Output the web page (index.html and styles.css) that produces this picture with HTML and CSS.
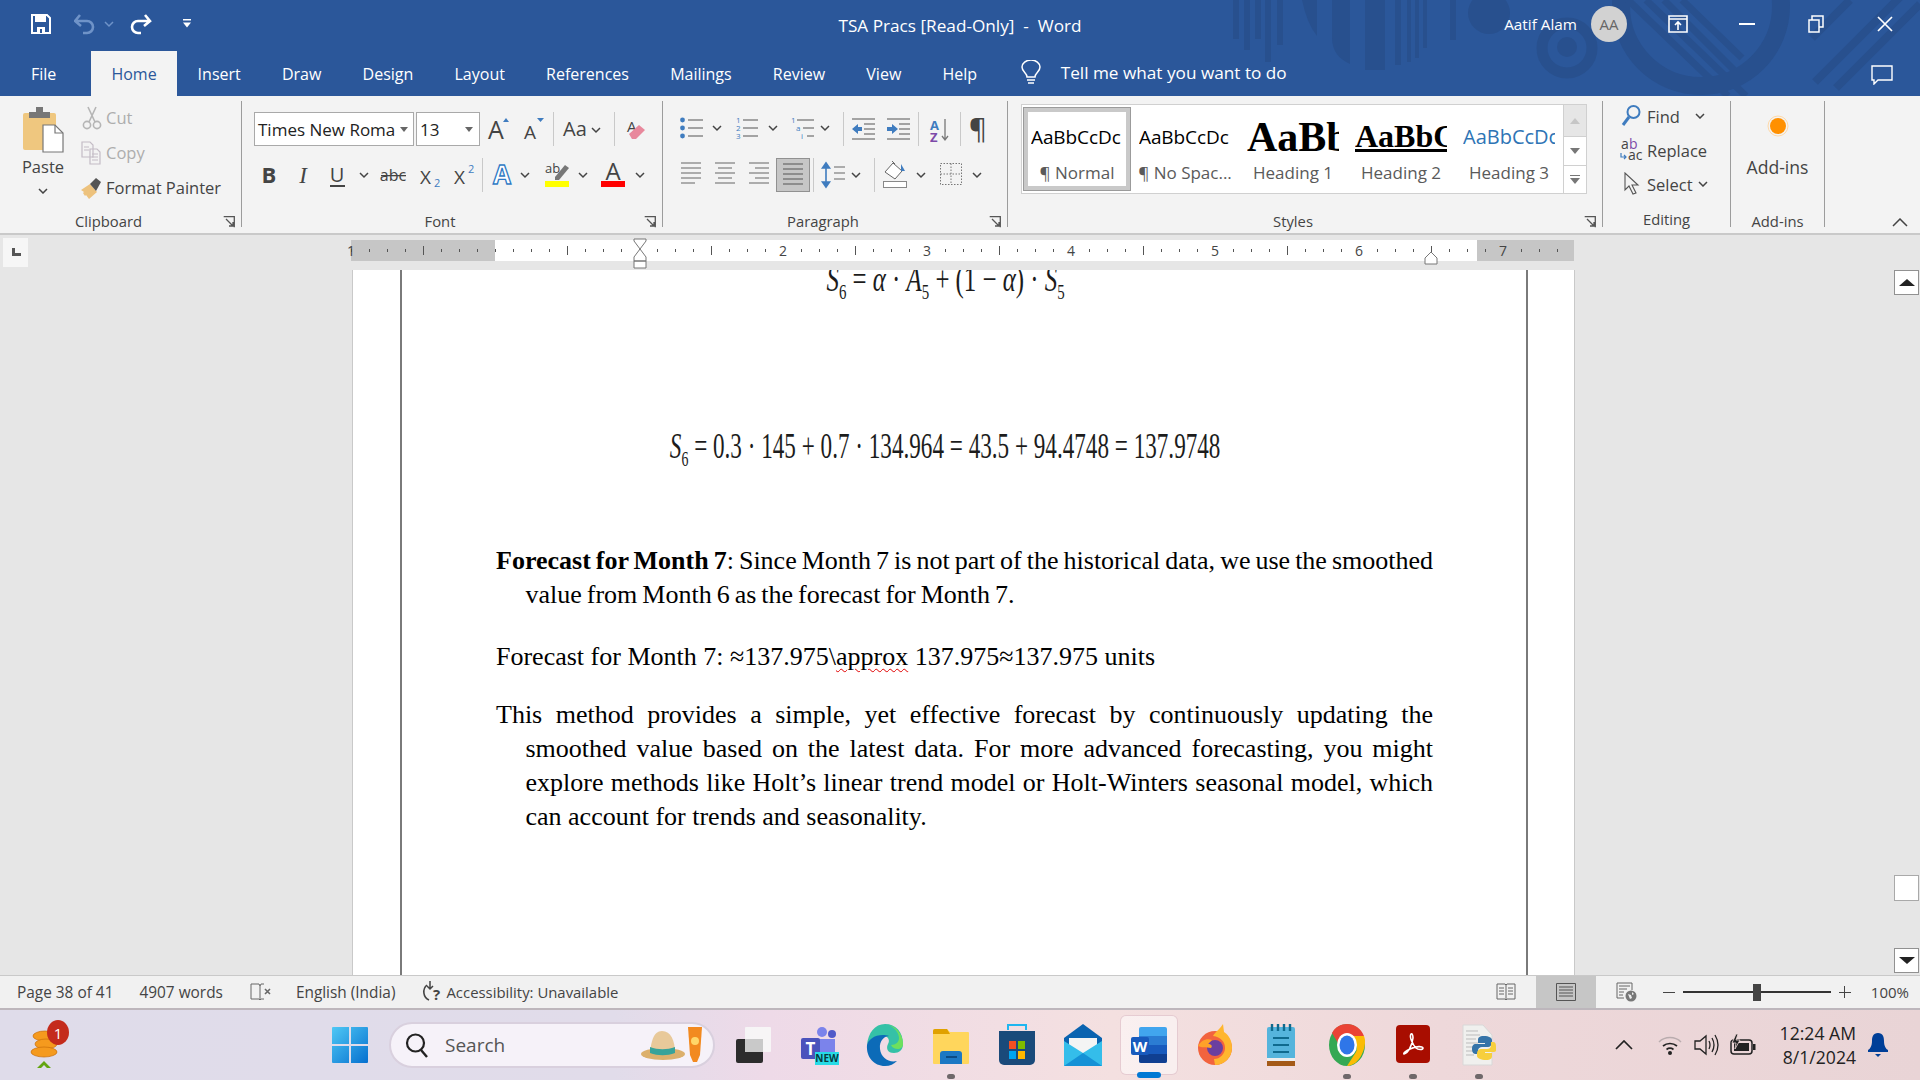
FILE: index.html
```html
<!DOCTYPE html>
<html lang="en">
<head>
<meta charset="utf-8">
<title>TSA Pracs [Read-Only] - Word</title>
<link rel="stylesheet" href="styles.css">
</head>
<body>
<div class="app">

<header class="titlebar">
  <svg class="pattern" width="720" height="96" viewBox="1200 0 720 96" aria-hidden="true">
    <g fill="#28508e">
      <rect x="1233" y="0" width="6" height="39"/><rect x="1244" y="0" width="6" height="50"/><rect x="1255" y="0" width="6" height="39"/><rect x="1265" y="0" width="6" height="62"/><rect x="1277" y="0" width="6" height="45"/>
      <path d="M1302 0h15v36q-10-12-15-36z"/><path d="M1332 0h18v64q-18-8-18-26z"/><rect x="1365" y="0" width="20" height="70"/><rect x="1395" y="0" width="6" height="65"/><rect x="1407" y="0" width="4" height="62"/><rect x="1415" y="0" width="4" height="58"/><rect x="1423" y="0" width="4" height="48"/><rect x="1450" y="0" width="6" height="40"/>
      <circle cx="1489" cy="13" r="21"/><circle cx="1567" cy="47" r="10"/>
    </g>
    <g fill="none" stroke="#28508e">
      <circle cx="1567" cy="48" r="25" stroke-width="11"/>
      <circle cx="1701" cy="6" r="80" stroke-width="18"/>
      <path d="M1628 0l100 96M1646 0l100 96M1664 0l70 70M1682 0l60 58" stroke-width="7"/>
      <path d="M1815 82l105-105M1836 88l84-84M1812 38l38-38" stroke-width="8"/>
    </g>
  </svg>
  <div class="titlerow">
    <div class="qat">
      <svg width="20" height="20" viewBox="0 0 20 20"><path d="M1 1h15l3 3v15H1z" fill="none" stroke="#fff" stroke-width="2"/><path d="M4 1h11v7H4zM6 13h8v6H6z" fill="#fff"/><rect x="9" y="15" width="2" height="4" fill="#2b579a"/></svg>
      <svg class="qat-undo" width="56" height="22" viewBox="0 0 56 22"><path d="M6 2L1 8l6 5M2 8h11a6 6 0 0 1 0 12H9" fill="none" stroke="#6f93c8" stroke-width="2.6"/><path d="M31 9l4 4 4-4" fill="none" stroke="#6f93c8" stroke-width="1.5"/></svg>
      <svg width="22" height="22" viewBox="0 0 22 22"><path d="M15 2l5 6-6 5M19 8H8a6 6 0 0 0 0 12h3" fill="none" stroke="#fff" stroke-width="2.6"/></svg>
      <svg class="qat-more" width="8" height="9" viewBox="0 0 8 9"><path d="M0 0h8v1.5H0zM0 3.5h8L4 8.500z" fill="#fff"/></svg>
    </div>
    <div class="doctitle">TSA Pracs [Read-Only]  -  Word</div>
    <div class="account">
      <span class="username">Aatif Alam</span>
      <span class="avatar">AA</span>
      <svg class="win-a" width="20" height="18" viewBox="0 0 20 18"><path d="M1 1h18v16H1zM1 4h18" fill="none" stroke="#fff" stroke-width="1.6"/><path d="M10 15V7M7 10l3-3 3 3" fill="none" stroke="#fff" stroke-width="1.6"/></svg>
      <svg class="win-b" width="16" height="4" viewBox="0 0 16 4"><rect width="16" height="2" y="1" fill="#fff"/></svg>
      <svg class="win-c" width="16" height="18" viewBox="0 0 16 18"><path d="M1 5h10v12H1z M4 5V1h11v11h-4" fill="none" stroke="#fff" stroke-width="1.5"/></svg>
      <svg class="win-d" width="16" height="16" viewBox="0 0 16 16"><path d="M1 1l14 14M15 1L1 15" stroke="#fff" stroke-width="1.7"/></svg>
    </div>
  </div>
  <nav class="tabs">
    <a class="tab t-file">File</a>
    <a class="tab active">Home</a>
    <a class="tab">Insert</a>
    <a class="tab">Draw</a>
    <a class="tab">Design</a>
    <a class="tab">Layout</a>
    <a class="tab">References</a>
    <a class="tab">Mailings</a>
    <a class="tab">Review</a>
    <a class="tab">View</a>
    <a class="tab">Help</a>
    <span class="tellme">
      <svg width="20" height="25" viewBox="0 0 20 25"><path d="M6 17c0-4-5-5-5-10a9 7 0 0 1 18 0c0 5-5 6-5 10z" fill="none" stroke="#fff" stroke-width="1.5"/><path d="M6 20h8M7 23h6" stroke="#fff" stroke-width="1.6"/></svg>
      <span>Tell me what you want to do</span>
    </span>
    <svg class="comment" width="22" height="20" viewBox="0 0 22 20"><path d="M1 1h20v14H7l-4 4v-4H1z" fill="none" stroke="#fff" stroke-width="1.4"/></svg>
  </nav>
</header>

<section class="ribbon">
  <!-- Clipboard -->
  <div class="group">
    <div class="body clip">
      <div class="paste">
        <svg width="42" height="46" viewBox="0 0 42 46"><rect x="1" y="6" width="33" height="37" rx="2" fill="#efc77f"/><path d="M7 5h7V0h7v5h7v6H7z" fill="#777"/><path d="M21 18h12l8 8v19H21z" fill="#fff" stroke="#777" stroke-width="1.2"/><path d="M33 18v8h8" fill="none" stroke="#777" stroke-width="1.2"/></svg>
        <span>Paste</span>
        <svg class="pchev" width="10" height="6" viewBox="0 0 10 6"><path d="M1 1l4 4 4-4" fill="none" stroke="#444" stroke-width="1.5"/></svg>
      </div>
      <div class="cliplist">
        <div class="cliprow off"><svg width="28" height="24" viewBox="0 0 28 24"><g fill="none" stroke="#b5b5b5" stroke-width="1.6"><circle cx="9" cy="19" r="3.6"/><circle cx="19" cy="19" r="3.6"/><path d="M11 16L18 1M17 16L10 1"/></g></svg><span>Cut</span></div>
        <div class="cliprow off"><svg width="28" height="24" viewBox="0 0 28 24"><g fill="none" stroke="#c4bcc6" stroke-width="1.2"><path d="M4 1h8l3 3v12H4zM12 8h7l3 3v12H12z" fill="#f3f3f3"/><path d="M6 6h5M6 9h5M14 13h6M14 16h6M14 19h6"/></g></svg><span>Copy</span></div>
        <div class="cliprow"><svg width="28" height="24" viewBox="0 0 28 24"><path d="M3 14l9-6 7 8-8 7-3-4-1 1-2-3 1-1z" fill="#edc27d"/><path d="M12 8l6-6 5 4-5 9z" fill="#555"/></svg><span>Format Painter</span></div>
      </div>
    </div>
    <div class="label"><span>Clipboard</span><i class="launch"><svg width="12" height="12" viewBox="0 0 12 12"><path d="M.7.7h10.6v10.6M3 3l7 7M6 10h4V6" fill="none" stroke="#555" stroke-width="1.3"/></svg></i></div>
  </div>

  <!-- Font -->
  <div class="group">
    <div class="body rows">
      <div class="row r-font1">
        <div class="combo c-name"><span>Times New Roma</span><b class="caret"></b></div>
        <div class="combo c-size"><span>13</span><b class="caret"></b></div>
        <svg width="36" height="34" viewBox="0 0 36 34"><text x="8" y="27" class="ic-t" font-size="25">A</text><path d="M23 10l3-4 3 4z" fill="#3f7cbf"/></svg>
        <svg width="37" height="34" viewBox="0 0 37 34"><text x="8" y="27" class="ic-t" font-size="19">A</text><path d="M21 6h7l-3.500 4z" fill="#3f7cbf"/></svg>
        <i class="vsep"></i>
        <svg width="60" height="34" viewBox="0 0 60 34"><text x="9" y="24" class="ic-t" font-size="20">Aa</text><path d="M38 16l4 4 4-4" fill="none" stroke="#444" stroke-width="1.5"/></svg>
        <i class="vsep"></i>
        <svg width="45" height="34" viewBox="0 0 45 34"><text x="12" y="20" class="ic-t" font-size="15">A</text><path d="M14 22l10-9 6 5-9 9h-4z" fill="#e8889c"/></svg>
      </div>
      <div class="row r-font2">
        <svg width="35" height="34" viewBox="0 0 35 34"><text x="17" y="25" class="ic-c ic-b" font-size="22">B</text></svg>
        <svg width="33" height="34" viewBox="0 0 33 34"><text x="16" y="25" class="ic-c ic-i" font-size="23">I</text></svg>
        <svg width="53" height="34" viewBox="0 0 53 34"><text x="17" y="24" class="ic-c" font-size="20">U</text><rect x="10" y="27" width="15" height="2" fill="#444"/><path d="M40 15l4 4 4-4" fill="none" stroke="#444" stroke-width="1.5"/></svg>
        <svg width="40" height="34" viewBox="0 0 40 34"><text x="20" y="23" class="ic-c" font-size="16">abc</text><rect x="8" y="17" width="25" height="1.300" fill="#444"/></svg>
        <svg width="34" height="34" viewBox="0 0 34 34"><text x="7" y="26" class="ic-t" font-size="19">X</text><text x="21" y="29" class="ic-blue" font-size="11">2</text></svg>
        <svg width="35" height="34" viewBox="0 0 35 34"><text x="7" y="26" class="ic-t" font-size="19">X</text><text x="21" y="15" class="ic-blue" font-size="11">2</text></svg>
        <i class="vsep"></i>
        <svg width="52" height="34" viewBox="0 0 52 34"><text x="19" y="26" class="ic-c ic-out" font-size="26">A</text><path d="M38 15l4 4 4-4" fill="none" stroke="#444" stroke-width="1.5"/></svg>
        <svg width="57" height="34" viewBox="0 0 57 34"><text x="10" y="15" class="ic-t" font-size="13">ab</text><path d="M20 19l10-12 4 3-10 12h-4z" fill="#777"/><rect x="10" y="23" width="24" height="6" fill="#ffff00"/><path d="M44 15l4 4 4-4" fill="none" stroke="#444" stroke-width="1.5"/></svg>
        <svg width="58" height="34" viewBox="0 0 58 34"><text x="21" y="22" class="ic-c" font-size="24">A</text><rect x="9" y="23" width="24" height="6" fill="#f00"/><path d="M44 15l4 4 4-4" fill="none" stroke="#444" stroke-width="1.5"/></svg>
      </div>
    </div>
    <div class="label"><span>Font</span><i class="launch"><svg width="12" height="12" viewBox="0 0 12 12"><path d="M.7.7h10.6v10.6M3 3l7 7M6 10h4V6" fill="none" stroke="#555" stroke-width="1.3"/></svg></i></div>
  </div>

  <!-- Paragraph -->
  <div class="group">
    <div class="body rows">
      <div class="row r-para">
        <svg width="54" height="34" viewBox="0 0 54 34"><g fill="#3f7cbf"><circle cx="9.500" cy="8" r="2.400"/><circle cx="9.500" cy="16" r="2.400"/><circle cx="9.500" cy="24" r="2.400"/></g><path d="M15 8h15M15 16h15M15 24h15" stroke="#555" stroke-width="1.200"/><path d="M40 14l4 4 4-4" fill="none" stroke="#444" stroke-width="1.500"/></svg>
        <svg width="56" height="34" viewBox="0 0 56 34"><g font-size="8"><text x="9" y="11" class="ic-blue">1</text><text x="9" y="19" class="ic-blue">2</text><text x="9" y="27" class="ic-blue">3</text></g><path d="M16 8h15M16 16h15M16 24h15" stroke="#555" stroke-width="1.200"/><path d="M42 14l4 4 4-4" fill="none" stroke="#444" stroke-width="1.500"/></svg>
        <svg width="60" height="34" viewBox="0 0 60 34"><g font-size="8"><text x="8" y="11" class="ic-blue">1</text><text x="13" y="19" class="ic-blue">a</text><text x="18" y="27" class="ic-blue">i</text></g><path d="M14 8h17M20 16h11M24 24h7" stroke="#555" stroke-width="1.200"/><path d="M38 14l4 4 4-4" fill="none" stroke="#444" stroke-width="1.500"/></svg>
        <i class="vsep"></i>
        <svg width="37" height="34" viewBox="0 0 37 34"><path d="M8 7h23M20 12h11M20 17h11M20 22h11M8 27h23" stroke="#555" stroke-width="1.200"/><path d="M8 17l6-5v3h4v4h-4v3z" fill="#3f7cbf"/></svg>
        <svg width="37" height="34" viewBox="0 0 37 34"><path d="M6 7h23M18 12h11M18 17h11M18 22h11M6 27h23" stroke="#555" stroke-width="1.200"/><path d="M17 17l-6-5v3H6v4h5v3z" fill="#3f7cbf"/></svg>
        <i class="vsep"></i>
        <svg width="41" height="34" viewBox="0 0 41 34"><text x="11" y="18" font-size="13" class="ic-blue ic-b">A</text><text x="11" y="30" font-size="13" class="ic-purple ic-b">Z</text><path d="M26 7v21M23 24l3 4 3-4" fill="none" stroke="#777" stroke-width="1.300"/></svg>
        <i class="vsep"></i>
        <svg width="35" height="34" viewBox="0 0 35 34"><text x="17" y="27" class="ic-c" font-size="28">¶</text></svg>
      </div>
      <div class="row r-para">
        <svg width="35" height="34" viewBox="0 0 35 34"><path d="M8 5h20M8 10h20M8 15h20M8 20h20M8 25h14" stroke="#666" stroke-width="1.200"/></svg>
        <svg width="34" height="34" viewBox="0 0 34 34"><path d="M7 5h20M10 10h14M7 15h20M10 20h14M7 25h20" stroke="#666" stroke-width="1.200"/></svg>
        <svg width="34" height="34" viewBox="0 0 34 34"><path d="M7 5h20M13 10h14M7 15h20M13 20h14M7 25h20" stroke="#666" stroke-width="1.200"/></svg>
        <span class="pressed"><svg width="32" height="32" viewBox="0 0 32 32"><path d="M6 5h20M6 10h20M6 15h20M6 20h20M6 25h20" stroke="#555" stroke-width="1.200"/></svg></span>
        <i class="vsep"></i>
        <svg width="60" height="34" viewBox="0 0 60 34"><path d="M12 5v24M8.500 10l3.500-5 3.500 5zM8.500 24l3.500 5 3.500-5z" fill="#3f7cbf" stroke="#3f7cbf" stroke-width="1.600"/><path d="M20 9h11M20 15h11M20 21h11" stroke="#666" stroke-width="1.200"/><path d="M38 15l4 4 4-4" fill="none" stroke="#444" stroke-width="1.500"/></svg>
        <i class="vsep"></i>
        <svg width="55" height="34" viewBox="0 0 55 34"><path d="M10 14l8-9 9 8-7 8z" fill="#fff" stroke="#666"/><path d="M17 3l3 3" stroke="#666"/><path d="M26 6l4 7h-4z" fill="#3f7cbf"/><rect x="8.500" y="23.500" width="23" height="6" fill="#fff" stroke="#888"/><path d="M42 15l4 4 4-4" fill="none" stroke="#444" stroke-width="1.500"/></svg>
        <svg width="60" height="34" viewBox="0 0 60 34"><path d="M10.500 5.500h21v21h-21zM21 5.500v21M10.500 16h21" fill="none" stroke="#777" stroke-dasharray="1.500 1.500"/><path d="M43 15l4 4 4-4" fill="none" stroke="#444" stroke-width="1.500"/></svg>
      </div>
    </div>
    <div class="label"><span>Paragraph</span><i class="launch"><svg width="12" height="12" viewBox="0 0 12 12"><path d="M.7.7h10.6v10.6M3 3l7 7M6 10h4V6" fill="none" stroke="#555" stroke-width="1.3"/></svg></i></div>
  </div>

  <!-- Styles -->
  <div class="group">
    <div class="body">
      <div class="gallery">
        <div class="style sel"><div class="sample s-n"><span>AaBbCcDc</span></div><div class="sname">¶ Normal</div></div>
        <div class="style"><div class="sample s-n"><span>AaBbCcDc</span></div><div class="sname">¶ No Spac...</div></div>
        <div class="style"><div class="sample s-h1"><span>AaBb</span></div><div class="sname">Heading 1</div></div>
        <div class="style"><div class="sample s-h2"><span>AaBbC</span></div><div class="sname">Heading 2</div></div>
        <div class="style"><div class="sample s-h3"><span>AaBbCcDc</span></div><div class="sname">Heading 3</div></div>
        <div class="gscroll">
          <div class="gb gb-up"><b class="tri-up"></b></div>
          <div class="gb"><b class="tri-dn"></b></div>
          <div class="gb gb-more"><b class="bar"></b><b class="tri-dn"></b></div>
        </div>
      </div>
    </div>
    <div class="label"><span>Styles</span><i class="launch"><svg width="12" height="12" viewBox="0 0 12 12"><path d="M.7.7h10.6v10.6M3 3l7 7M6 10h4V6" fill="none" stroke="#555" stroke-width="1.3"/></svg></i></div>
  </div>

  <!-- Editing -->
  <div class="group">
    <div class="body editing">
      <div class="editrow"><svg width="28" height="24" viewBox="0 0 28 24"><circle cx="14.500" cy="8" r="6" fill="none" stroke="#3f7cbf" stroke-width="2"/><path d="M10 13l-6 8" stroke="#3f7cbf" stroke-width="3"/></svg><span>Find</span><svg class="ch-a" width="10" height="6" viewBox="0 0 10 6"><path d="M1 1l4 4 4-4" fill="none" stroke="#444" stroke-width="1.500"/></svg></div>
      <div class="editrow"><svg width="28" height="24" viewBox="0 0 28 24"><text x="2" y="11" font-size="14">a</text><text x="10" y="11" font-size="14" class="ic-purple">b</text><text x="9" y="22" font-size="14">ac</text><path d="M2 15v4h5M5 17l2 2-2 2" fill="none" stroke="#3f7cbf" stroke-width="1.200"/></svg><span>Replace</span></div>
      <div class="editrow"><svg width="28" height="24" viewBox="0 0 28 24"><path d="M6 1v17l4-4 4 8 3-1-4-8h6z" fill="#f3f3f3" stroke="#555" stroke-width="1.100"/></svg><span>Select</span><svg class="ch-b" width="10" height="6" viewBox="0 0 10 6"><path d="M1 1l4 4 4-4" fill="none" stroke="#444" stroke-width="1.500"/></svg></div>
    </div>
    <div class="label"><span>Editing</span></div>
  </div>

  <!-- Add-ins -->
  <div class="group">
    <div class="body addins">
      <svg width="24" height="24" viewBox="0 0 24 24"><circle cx="12" cy="12" r="8" fill="#ff9000"/><circle cx="12" cy="12" r="10" fill="none" stroke="#ffd9a8" stroke-width="1"/></svg>
      <span>Add-ins</span>
    </div>
    <div class="label"><span>Add-ins</span></div>
  </div>

  <div class="collapse"><svg width="16" height="9" viewBox="0 0 16 9"><path d="M1 8l7-7 7 7" fill="none" stroke="#444" stroke-width="1.500"/></svg></div>
</section>

<section class="rulerbar">
  <div class="tabstop"><svg width="12" height="12" viewBox="0 0 12 12"><path d="M2 2h3v5h6v3H2z" fill="#555"/></svg></div>
  <div class="ruler">
    <div class="digits">
      <span><b class="g0">1</b></span><span></span><span></span><span><b>2</b></span><span><b>3</b></span><span><b>4</b></span><span><b>5</b></span><span><b>6</b></span><span><b class="g">7</b></span>
    </div>
    <svg class="indent-l" width="14" height="31" viewBox="0 0 14 31"><path d="M1 1h12v2L7 11 1 3zM7 11l6 8v4H1v-4zM1 23h12v7H1z" fill="#fff" stroke="#777"/></svg>
    <svg class="indent-r" width="14" height="14" viewBox="0 0 14 14"><path d="M1 13V7l6-6 6 6v6z" fill="#fff" stroke="#777"/></svg>
  </div>
</section>

<main class="workspace">
  <div class="page">
    <div class="pageframe">
      <div class="formula f1"><span><i>S</i><sub>6</sub> = <i>α</i> · <i>A</i><sub>5</sub> + (1 − <i>α</i>) · <i>S</i><sub>5</sub></span></div>
      <div class="formula f2"><span><i>S</i><sub>6</sub> = 0.3 · 145 + 0.7 · 134.964 = 43.5 + 94.4748 = 137.9748</span></div>
      <p class="para p1"><strong>Forecast for Month 7</strong>: Since Month 7 is not part of the historical data, we use the smoothed value from Month 6 as the forecast for Month 7.</p>
      <p class="para p2">Forecast for Month 7: ≈137.975\<u class="spell">approx</u> 137.975≈137.975 units</p>
      <p class="para p3">This method provides a simple, yet effective forecast by continuously updating the smoothed value based on the latest data. For more advanced forecasting, you might explore methods like Holt’s linear trend model or Holt-Winters seasonal model, which can account for trends and seasonality.</p>
    </div>
  </div>
  <aside class="vscroll">
    <div class="sbtn"><b class="tri-up dark"></b></div>
    <div class="sthumb"></div>
    <div class="sbtn"><b class="tri-dn dark"></b></div>
  </aside>
</main>

<footer class="statusbar">
  <span class="st st-page">Page 38 of 41</span>
  <span class="st st-words">4907 words</span>
  <svg class="st-proof" width="22" height="18" viewBox="0 0 22 18"><path d="M1 1h8l1 2v14l-1-1H1zM10 3l1-2h3M10 17l1-1h3" fill="none" stroke="#666"/><path d="M15 6l5 5M20 6l-5 5" stroke="#666" stroke-width="1.600"/></svg>
  <span class="st st-lang">English (India)</span>
  <svg class="st-acc" width="24" height="24" viewBox="0 0 24 24"><path d="M6 5a9 9 0 0 0 2 15" fill="none" stroke="#444" stroke-width="1.600"/><path d="M9 1v8M6 6l3 3 3-3" fill="none" stroke="#444" stroke-width="1.500"/><text x="12" y="20" font-size="15" class="ic-b">?</text></svg>
  <span class="st st-a11y">Accessibility: Unavailable</span>
  <div class="st-right">
    <svg width="20" height="18" viewBox="0 0 20 18"><path d="M1 1h8l1 1 1-1h8v15h-8l-1 1-1-1H1zM10 2v14M3 5h5M3 8h5M3 11h5M12 5h5M12 8h5M12 11h5" fill="none" stroke="#666"/></svg>
    <span class="view-sel"><svg width="20" height="18" viewBox="0 0 20 18"><path d="M.5.500h19v17H.5zM3 4h14M3 7h14M3 10h14M3 13h14" fill="none" stroke="#555"/></svg></span>
    <svg width="21" height="20" viewBox="0 0 21 20"><path d="M1 1h15v7M8 16H1V1M3 4h11M3 7h8M3 10h5M3 13h4" fill="none" stroke="#666"/><circle cx="15" cy="14" r="5.500" fill="#777"/><path d="M12 12l3 1 1 3-2 1zM16 10l2 2-2 1z" fill="#eee"/></svg>
    <div class="zoomer">
      <span class="zbtn"></span>
      <div class="slider"><i></i></div>
      <span class="zbtn plus"></span>
    </div>
    <span class="st st-pct">100%</span>
  </div>
</footer>

<footer class="taskbar">
  <div class="tb-coins">
    <svg width="40" height="46" viewBox="0 0 40 46"><g fill="#f59a1e" stroke="#c86f08" stroke-width=".7"><ellipse cx="15" cy="12" rx="12" ry="5"/><ellipse cx="16" cy="20" rx="11" ry="5"/><ellipse cx="14" cy="28" rx="13" ry="5"/></g><path d="M14 37l7 7h-4l-3-3-3 3H7z" fill="#63a510"/></svg>
    <span class="badge">1</span>
  </div>
  <svg class="tb-win" width="36" height="36" viewBox="0 0 36 36"><defs><linearGradient id="wg" x1="0" y1="0" x2="1" y2="1"><stop offset="0" stop-color="#4fc8f5"/><stop offset="1" stop-color="#0670cf"/></linearGradient></defs><path d="M0 1a1 1 0 0 1 1-1h16v17H0zM19 0h16a1 1 0 0 1 1 1v16H19zM0 19h17v17H1a1 1 0 0 1-1-1zM19 19h17v16a1 1 0 0 1-1 1H19z" fill="url(#wg)"/></svg>
  <div class="searchbox">
    <svg width="24" height="26" viewBox="0 0 24 26"><circle cx="10.500" cy="11" r="8.500" fill="none" stroke="#222" stroke-width="2.200"/><path d="M16 18l6 7" stroke="#222" stroke-width="2.400"/></svg>
    <span>Search</span>
    <svg class="hat" width="62" height="36" viewBox="0 0 62 36"><ellipse cx="22" cy="27" rx="22" ry="6" fill="#dcb06c"/><path d="M9 26c1-10 3-22 12-22s13 10 13 22z" fill="#e8c99a"/><path d="M9 20c8 3 17 3 25 0v6c-8 3-17 3-25 0z" fill="#38a39a"/><path d="M47 0h14l-2 28-3 7h-4l-3-7z" fill="#f28a20"/><circle cx="54" cy="14" r="4" fill="#ffd76a"/></svg>
  </div>
  <div class="tb-apps">
    <div class="app-i"><svg width="40" height="40" viewBox="0 0 40 40"><rect x="3" y="14" width="27" height="24" rx="2" fill="#2c2c2c"/><rect x="12" y="2" width="26" height="25" rx="1" fill="#f7f7f7" opacity=".9"/><rect x="12" y="14" width="18" height="13" fill="#c9c9c9"/></svg></div>
    <div class="app-i"><svg width="40" height="40" viewBox="0 0 40 40"><circle cx="23" cy="7" r="5" fill="#7b83eb"/><circle cx="33" cy="9" r="4" fill="#5059c9"/><path d="M17 14h19v14a8 8 0 0 1-16 0z" fill="#7b83eb"/><rect x="2" y="13" width="19" height="21" rx="2" fill="#4b53bc"/><text x="11.500" y="30" class="ic-c ic-b ic-white" font-size="17">T</text><rect x="16" y="27" width="24" height="13" fill="#27dbe6"/><text x="28" y="37" class="ic-c ic-b ic-dark" font-size="10">NEW</text></svg></div>
    <div class="app-i"><svg width="40" height="42" viewBox="0 0 40 42"><path d="M20 0C31 0 38 8 38 20c0 6-4 9-9 9-7 0-8-5-6-9 2-3 1-8-5-8C9 12 4 16 2 21 3 9 10 0 20 0z" fill="#35c1a7"/><path d="M2 21c-1 12 7 21 18 21 5 0 9-2 12-5-8 2-16-3-17-12s5-13 9-13c-2-1-4-1-6-1C9 11 3 16 2 21z" fill="#0c6bb8"/><path d="M38 20c0-9-6-17-14-19 6 3 10 8 10 13 0 4-3 7-8 7 2 5 12 6 12-1z" fill="#6ee05d"/></svg></div>
    <div class="app-i dot"><svg width="38" height="40" viewBox="0 0 38 40"><path d="M1 6a2 2 0 0 1 2-2h12l3 3h18a1 1 0 0 1 1 1v30a1 1 0 0 1-1 1H2a1 1 0 0 1-1-1z" fill="#ffd65c"/><path d="M1 6a2 2 0 0 1 2-2h12l3 5H1z" fill="#e0a100"/><path d="M8 39V29a3 3 0 0 1 3-3h16a3 3 0 0 1 3 3v10z" fill="#1c78c4"/><rect x="14" y="31" width="11" height="2" fill="#0b4b85"/></svg></div>
    <div class="app-i"><svg width="36" height="42" viewBox="0 0 36 42"><path d="M9 6V1h18v5" fill="none" stroke="#1fb6f0" stroke-width="2"/><path d="M0 7h36v29a5 5 0 0 1-5 5H5a5 5 0 0 1-5-5z" fill="#1a4a7a"/><rect x="10" y="17" width="7" height="8" fill="#f25022"/><rect x="19" y="17" width="7" height="8" fill="#7fba00"/><rect x="10" y="27" width="7" height="8" fill="#00a4ef"/><rect x="19" y="27" width="7" height="8" fill="#ffb900"/></svg></div>
    <div class="app-i"><svg width="38" height="42" viewBox="0 0 38 42"><path d="M0 14L19 0l19 14v27H0z" fill="#0a63b0"/><path d="M5 14h28v10L19 30 5 24z" fill="#f4f4f4"/><path d="M0 17l19 12 19-12v25H0z" fill="#34bdea"/><path d="M0 42l19-13 19 13z" fill="#1591d6"/></svg></div>
    <div class="app-i act"><svg width="40" height="40" viewBox="0 0 40 40"><rect x="10" y="2" width="28" height="36" rx="2" fill="#41a5ee"/><rect x="10" y="11" width="28" height="9" fill="#2b7cd3"/><rect x="10" y="20" width="28" height="9" fill="#185abd"/><path d="M10 29h28v7a2 2 0 0 1-2 2H12a2 2 0 0 1-2-2z" fill="#103f91"/><rect x="2" y="12" width="18" height="18" rx="2" fill="#185abd"/><text x="11" y="27" class="ic-c ic-b ic-white" font-size="15">W</text></svg></div>
    <div class="app-i"><svg width="36" height="42" viewBox="0 0 36 42"><circle cx="18" cy="24" r="17" fill="#f2633e"/><path d="M18 41a17 17 0 0 0 17-17c0-6-2-12-8-16l-1-8c-3 5-8 8-10 12 8 1 12 6 12 12s-5 11-11 11z" fill="#ffb62e"/><circle cx="18" cy="24" r="8" fill="#6b3fa0"/><path d="M1 22c3-5 8-8 14-6l-4 4c3 0 5 2 3 4-5-1-9 0-13-2z" fill="#ffa129"/></svg></div>
    <div class="app-i"><svg width="30" height="42" viewBox="0 0 30 42"><rect x="1" y="3" width="28" height="35" rx="2" fill="#55b4dc"/><rect x="1" y="36" width="28" height="6" fill="#a45a18"/><rect x="1" y="34" width="28" height="3" fill="#eee"/><path d="M6 0v7M12 0v7M18 0v7M24 0v7" stroke="#0f6a8e" stroke-width="2.400"/><path d="M7 14h16M7 21h16M7 28h16" stroke="#0f6a8e" stroke-width="2.200"/></svg></div>
    <div class="app-i dot"><svg width="36" height="42" viewBox="0 0 36 42"><ellipse cx="18" cy="21" rx="18" ry="21" fill="#34a853"/><path d="M18 0c7 0 14 4 17 12H18c-5 0-8 4-9 7L3 9c3-6 9-9 15-9z" fill="#ea4335"/><path d="M35 12c2 5 1 12-2 18-3 7-9 12-15 12l9-14c2-4 1-12-9-16z" fill="#fbbc05"/><ellipse cx="18" cy="21" rx="10" ry="12" fill="#fff"/><ellipse cx="18" cy="21" rx="7.500" ry="9.500" fill="#2f76e8"/></svg></div>
    <div class="app-i dot"><svg width="34" height="40" viewBox="0 0 34 40"><rect width="34" height="38" rx="4" fill="#a80d00"/><path d="M8 29c4-1 8-8 9-16 0-3-1-5-2-4-2 3 2 11 5 14 2 2 7 2 7 0s-7-2-13 1c-4 2-7 4-6 5z" fill="none" stroke="#fff" stroke-width="1.600"/></svg></div>
    <div class="app-i dot"><svg width="34" height="42" viewBox="0 0 34 42"><path d="M1 1h20l9 10v30H1z" fill="#f0f0ee" stroke="#d8d8d8"/><path d="M4 7h12M4 11h14M4 15h10M4 19h12M4 23h9M4 27h10M4 31h8" stroke="#bbb"/><path d="M22 12c-5 0-6 2-6 4v3h7v1h-9c-3 0-4 2-4 5 0 4 2 5 4 5h2v-3c0-3 2-4 4-4h6c2 0 4-2 4-4v-3c0-2-3-4-8-4z" fill="#3574a8"/><path d="M24 36c5 0 6-2 6-4v-3h-7v-1h9c3 0 2-3 2-5 0-4-1-5-3-5h-2v3c0 3-2 4-4 4h-6c-2 0-4 2-4 4v3c0 2 4 4 9 4z" fill="#f7cf3d"/></svg></div>
  </div>
  <div class="tray">
    <svg class="tr-chev" width="18" height="10" viewBox="0 0 18 10"><path d="M1 9l8-8 8 8" fill="none" stroke="#222" stroke-width="1.700"/></svg>
    <svg class="tr-wifi" width="24" height="20" viewBox="0 0 24 20"><path d="M1 7a16 16 0 0 1 22 0" fill="none" stroke="#b9acae" stroke-width="1.500"/><path d="M5 11a11 11 0 0 1 14 0M8.500 14.500a6 6 0 0 1 7 0" fill="none" stroke="#222" stroke-width="1.700"/><circle cx="12" cy="18" r="2" fill="#222"/></svg>
    <svg class="tr-vol" width="26" height="22" viewBox="0 0 26 22"><path d="M1 7h5l6-5v18l-6-5H1z" fill="none" stroke="#222" stroke-width="1.300"/><path d="M15 7q2 4 0 8M18 4q4 7 0 14M21 1q6 10 0 20" fill="none" stroke="#222" stroke-width="1.300"/></svg>
    <svg class="tr-bat" width="26" height="22" viewBox="0 0 26 22"><rect x="1" y="6" width="21" height="14" rx="3" fill="none" stroke="#222" stroke-width="1.500"/><path d="M4 9h15v8H4z" fill="#222"/><rect x="23" y="10" width="2.500" height="6" fill="#222"/><path d="M6 0L2 9h4l-1 6 5-9H6l2-6z" fill="#222" stroke="#ecd7d7" stroke-width=".8"/></svg>
    <div class="clock"><span>12:24 AM</span><span>8/1/2024</span></div>
    <svg class="tr-bell" width="20" height="24" viewBox="0 0 20 24"><path d="M10 0c5 0 6 4 6 8 0 5 2 8 4 9v2H0v-2c2-1 4-4 4-9 0-4 1-8 6-8z" fill="#003f98"/><path d="M7 21h6l-3 3z" fill="#003f98"/></svg>
  </div>
</footer>
</div>
</body>
</html>
```

FILE: styles.css
```css
* { box-sizing: border-box; }
html, body { margin: 0; padding: 0; }
body { font-family: "Open Sans", "Noto Sans", sans-serif; color: #444; }
.app { width: 1920px; height: 1080px; display: flex; flex-direction: column; overflow: hidden; background: #e6e6e6; }
svg { display: block; flex: none; }
svg text { font-family: "Open Sans", sans-serif; fill: #444; }
svg .ic-c { text-anchor: middle; }
svg .ic-t { text-anchor: start; }
svg .ic-b { font-weight: 700; }
svg .ic-i { font-style: italic; font-family: "Liberation Serif", serif; }
svg .ic-blue { fill: #3f7cbf; }
svg .ic-purple { fill: #7d4aa8; }
svg .ic-white { fill: #fff; }
svg .ic-dark { fill: #073b3f; }
svg .ic-out { fill: #fff; stroke: #2f7ac4; stroke-width: 1.3px; font-weight: 700; }

/* Title bar */
.titlebar { position: relative; height: 96px; flex: none; background: #2b579a; color: #fff; display: flex; flex-direction: column; }
.pattern { position: absolute; top: 0; right: 0; }
.titlerow { position: relative; height: 51px; display: grid; grid-template-columns: 1fr auto 1fr; align-items: center; padding-bottom: 4px; }
.qat { display: flex; align-items: center; padding-left: 31px; }
.qat-undo { margin-left: 23px; }
.qat-more { margin-left: 31px; }
.doctitle { font-size: 17.200px; white-space: pre; padding-top: 4px; }
.account { display: flex; align-items: center; justify-content: flex-end; font-size: 15.300px; }
.username { margin-right: 14px; }
.avatar { width: 36px; height: 36px; border-radius: 50%; background: #d2d2d2; color: #666; display: flex; align-items: center; justify-content: center; font-size: 15px; }
.win-a { margin-left: 41px; }
.win-b { margin-left: 51px; }
.win-c { margin-left: 53px; }
.win-d { margin-left: 53px; margin-right: 27px; }

.tabs { position: relative; height: 45px; display: flex; align-items: stretch; font-size: 16px; }
.tab { display: flex; align-items: center; padding: 0 20.600px; }
.tab.t-file { padding: 0 0 0 31px; width: 91px; }
.tab.active { background: #f3f3f3; color: #2b579a; width: 86px; justify-content: center; padding: 0; }
.tellme { display: flex; align-items: center; gap: 20px; margin-left: 23px; font-size: 17.200px; padding-bottom: 2px; }
.comment { margin: 14px 27px 0 auto; }

/* Ribbon */
.ribbon { height: 139px; flex: none; background: #f3f3f3; border-bottom: 2px solid #c9c9c9; display: grid; grid-template-columns: 242px 421px 345px 595px 128px 94px 1fr; align-items: start; font-size: 16.500px; }
.group { height: 126px; margin-top: 5px; border-right: 1px solid #9c9c9c; display: flex; flex-direction: column; }
.body { height: 110px; flex: none; }
.label { height: 16px; display: flex; font-size: 14.800px; line-height: 20px; color: #444; }
.label span { flex: 1; text-align: center; }
.launch { width: 24px; padding: 5px 0 0 6px; display: block; }
.rows { padding-top: 11px; display: flex; flex-direction: column; gap: 12px; }
.row { display: flex; height: 34px; align-items: stretch; }
.r-font1 { padding-left: 12px; }
.r-font2 { padding-left: 10px; }
.r-para { padding-left: 10px; }
.vsep { width: 1px; background: #c9c9c9; flex: none; }

/* Clipboard */
.clip { display: flex; padding-top: 1px; }
.paste { width: 78px; padding-left: 8px; display: flex; flex-direction: column; align-items: center; padding-top: 5px; }
.paste > span { margin-top: 3px; line-height: 22px; }
.pchev { margin-top: 10px; }
.cliplist { display: flex; flex-direction: column; margin-top: -2px; }
.cliprow { height: 35px; display: flex; align-items: center; white-space: nowrap; }
.cliprow.off { color: #adadad; }

/* Font combos */
.combo { background: #fff; border: 1px solid #a9a9a9; display: flex; align-items: center; font-size: 17px; color: #222; padding-left: 3px; padding-top: 1px; }
.c-name { width: 160px; white-space: nowrap; justify-content: space-between; padding-right: 5px; }
.c-size { width: 64px; margin-left: 2px; justify-content: space-between; padding-right: 6px; }
.caret { width: 0; height: 0; border: 4px solid transparent; border-top: 5px solid #666; border-bottom: 0; flex: none; margin-left: 3px; }
.pressed { width: 34px; background: #c6c6c6; border: 1px solid #919191; margin-right: 3px; flex: none; }

/* Style gallery */
.gallery { margin: 3px 0 0 13px; width: 566px; height: 90px; background: #fff; border: 1px solid #d0d0d0; display: grid; grid-template-columns: repeat(5, 1fr) 23px; padding-left: 1px; }
.style { height: 84px; margin-top: 2px; padding: 6px; display: flex; flex-direction: column; align-items: center; }
.style.sel { background: #fff; border: 5px solid #c9c9c9; outline: 1px solid #9b9b9b; outline-offset: -1px; padding: 1px; }
.sample { width: 92px; height: 47px; overflow: hidden; white-space: nowrap; display: flex; align-items: center; color: #000; flex: none; }
.s-n { font: 19px "Open Sans", sans-serif; letter-spacing: -.1px; }
.s-h1 { font: 700 42px "Liberation Serif", serif; }
.s-h2 { font: 700 32px "Liberation Serif", serif; text-decoration: underline; }
.s-h3 { font: 20px "Open Sans", sans-serif; color: #2e74b5; }
.sname { font-size: 17px; line-height: 25px; color: #5a5a5a; white-space: nowrap; }
.gscroll { display: grid; grid-template-rows: 32px 29px 1fr; border-left: 1px solid #d0d0d0; }
.gb { display: flex; flex-direction: column; gap: 2px; align-items: center; justify-content: center; border-bottom: 1px solid #d0d0d0; }
.gb-up { background: #e6e6e6; }
.gb-more { border-bottom: 0; }
.tri-up { width: 0; height: 0; border: 5px solid transparent; border-top: 0; border-bottom: 6px solid #c6c6c6; }
.tri-dn { width: 0; height: 0; border: 5px solid transparent; border-bottom: 0; border-top: 6px solid #777; }
.tri-up.dark { border-width: 0 8px 7px; border-bottom-color: #222; border-left-color: transparent; border-right-color: transparent; }
.tri-dn.dark { border-width: 7px 8px 0; border-top-color: #222; border-left-color: transparent; border-right-color: transparent; }
.bar { width: 10px; height: 1px; background: #777; }

/* Editing */
.editing { padding: 0 0 0 16px; display: flex; flex-direction: column; margin-top: -2px; }
.editrow { height: 34px; display: flex; align-items: center; }
.ch-a { margin-left: 15px; }
.ch-b { margin-left: 5px; }

/* Add-ins */
.addins { display: flex; flex-direction: column; align-items: center; padding-top: 13px; gap: 17px; font-size: 17.600px; }
.collapse { height: 135px; display: flex; align-items: flex-end; justify-content: flex-end; padding: 0 12px 4px 0; }

/* Ruler */
.rulerbar { height: 35px; flex: none; display: flex; background: #e6e6e6; padding-top: 5px; }
.tabstop { width: 25px; height: 29px; margin: -2px 0 0 3px; background: #f6f6f6; display: flex; align-items: center; justify-content: center; flex: none; padding-bottom: 2px; }
.ruler { position: relative; margin-left: 323px; width: 1223px; height: 21px;
  background: linear-gradient(90deg, #c6c6c6 0 144px, #fff 144px 1126px, #c6c6c6 1126px);
}
.ruler::before { content: ""; position: absolute; inset: 0;
  background-image:
    repeating-linear-gradient(90deg, transparent 0 72px, #555 72px 73px, transparent 73px 144px),
    repeating-linear-gradient(90deg, #555 0 1px, transparent 1px 18px);
  background-size: 100% 9px, 100% 3px;
  background-position: 0 6px, 0 9px;
  background-repeat: no-repeat;
}
.digits { position: relative; display: grid; grid-template-columns: repeat(9, 144px); margin-left: -72px; height: 21px; font-size: 14px; line-height: 21px; color: #444; }
.digits span { display: flex; justify-content: center; }
.digits b { font-weight: 400; background: #fff; padding: 0 3px; }
.digits b.g { background: #c6c6c6; }
.digits b.g0 { background: none; padding: 0; }
.indent-l { position: absolute; left: 282px; top: -2px; }
.indent-r { position: absolute; left: 1073px; top: 11px; }

/* Document */
.workspace { flex: 1; display: flex; min-height: 0; }
.page { margin-left: 352px; width: 1223px; background: #fff; border-left: 1px solid #c9c9c9; border-right: 1px solid #c9c9c9; padding: 0 46px 0 47px; overflow: hidden; }
.pageframe { display: flow-root; height: 100%; border-left: 2px solid #7a7a7a; border-right: 2px solid #7a7a7a; padding: 0 93px 0 94px; font-family: "Liberation Serif", serif; color: #000; }
.formula { height: 44px; line-height: 44px; text-align: center; padding-right: 38px; font-size: 36px; white-space: nowrap; }
.formula span { display: inline-block; transform: scaleX(.643); color: #1c1c1c; }
.formula sub { font-size: 60%; line-height: 0; }
.f1 { margin-top: -13px; }
.f1 span { transform: scaleX(.69); }
.f2 { margin-top: 123px; margin-left: -100px; margin-right: -100px; }
.para { margin: 0; font-size: 26px; line-height: 33.800px; padding-left: 29.500px; text-indent: -29.500px; text-align: justify; }
.p1 { margin-top: 76px; word-spacing: -1.5px; }
.p2 { margin-top: 28px; }
.p3 { margin-top: 25px; }
.spell { text-decoration: underline wavy #e00000 1px; text-underline-offset: 3px; }

.vscroll { margin-left: auto; width: 26px; display: flex; flex-direction: column; padding-bottom: 2px; }
.sbtn { width: 25px; height: 25px; background: #fff; border: 1px solid #919191; display: flex; align-items: center; justify-content: center; flex: none; }
.sthumb { width: 25px; height: 26px; background: #fff; border: 1px solid #a9a9a9; margin-top: auto; margin-bottom: 47px; flex: none; }

/* Status bar */
.statusbar { height: 33px; flex: none; background: #f1f1f1; border-top: 1px solid #c9c9c9; display: flex; align-items: center; font-size: 15.400px; }
.st { white-space: nowrap; color: #444; }
.st-page { margin-left: 17px; }
.st-words { margin-left: 26px; }
.st-proof { margin-left: 27px; }
.st-lang { margin-left: 24px; }
.st-acc { margin-left: 26px; }
.st-a11y { margin-left: 1px; font-size: 14.900px; }
.st-right { margin-left: auto; height: 100%; display: flex; align-items: center; }
.view-sel { width: 60px; height: 100%; background: #c6c6c6; display: flex; align-items: center; justify-content: center; margin: 0 20px; }
.zoomer { display: flex; align-items: center; margin-left: 26px; }
.zbtn { width: 12px; height: 1px; background: #444; position: relative; display: block; }
.zbtn.plus::after { content: ""; position: absolute; left: 5.500px; top: -5.500px; width: 1px; height: 12px; background: #444; }
.slider { width: 148px; height: 2px; background: #333; margin: 0 8px; display: flex; justify-content: center; align-items: center; }
.slider i { width: 8px; height: 17px; background: #444; display: block; }
.st-pct { margin: 0 11px 0 20px; font-size: 15px; }

/* Taskbar */
.taskbar { height: 72px; flex: none; display: flex; align-items: center; border-top: 2px solid #bdb6bc;
  background: linear-gradient(90deg, #dfdcea 0%, #e1dcea 32%, #eedae8 40%, #f4e0e0 58%, #eed8da 75%, #e9d4d6 100%); }
.tb-coins { position: relative; width: 40px; margin-left: 30px; padding-top: 4px; }
.badge { position: absolute; left: 17px; top: 0; width: 22px; height: 25px; border-radius: 50%; background: #c42b1c; color: #fff; font-size: 15px; display: flex; align-items: center; justify-content: center; }
.tb-win { margin-left: 262px; }
.searchbox { width: 326px; height: 46px; margin-left: 21px; border-radius: 23px; background: #f6f2f9; border: 2px solid #d9d0de; display: flex; align-items: center; padding-left: 14px; font-size: 19px; color: #555; }
.searchbox > span { margin-left: 16px; }
.hat { margin-left: auto; margin-right: 10px; }
.tb-apps { display: flex; height: 100%; align-items: center; margin-left: 5px; }
.app-i { width: 66px; height: 58px; display: flex; align-items: center; justify-content: center; position: relative; flex: none; }
.app-i.dot::after { content: ""; position: absolute; left: 29px; bottom: -5px; width: 8px; height: 5px; border-radius: 3px; background: #6f686a; }
.app-i.act { background: rgba(255,255,255,.5); width: 56px; margin: 0 5px; border-radius: 5px; box-shadow: 0 0 0 1px rgba(220,190,200,.6); }
.app-i.act::after { content: ""; position: absolute; left: 16px; bottom: -4px; width: 24px; height: 6px; border-radius: 3px; background: #0078d4; }
.tray { margin-left: auto; display: flex; align-items: center; }
.tr-chev { margin-right: 25px; }
.tr-wifi { margin-right: 12px; }
.tr-vol { margin-right: 10px; }
.tr-bat { margin-right: 24px; }
.clock { display: flex; flex-direction: column; align-items: flex-end; font-size: 17.600px; line-height: 24px; color: #222; }
.tr-bell { margin: 0 32px 0 12px; }
```
